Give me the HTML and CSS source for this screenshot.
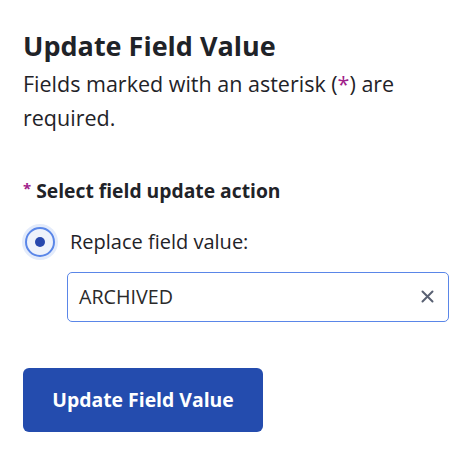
FILE: index.html
```html
<!DOCTYPE html>
<html>
<head>
<meta charset="utf-8">
<link rel="stylesheet" href="styles.css">
</head>
<body>
<main class="panel">
  <h1 class="title">Update Field Value</h1>
  <p class="note">Fields marked with an asterisk (<span class="req">*</span>) are required.</p>
  <form class="form">
    <div class="label"><span class="req req-sm">*</span> Select field update action</div>
    <label class="option">
      <span class="radio"><span class="dot"></span></span>
      <span class="option-text">Replace field value:</span>
    </label>
    <div class="input">
      <span class="input-value">ARCHIVED</span>
      <svg class="clear" width="13" height="13" viewBox="0 0 13 13"><path d="M1.5 1.5 L11.5 11.5 M11.5 1.5 L1.5 11.5" stroke="#596173" stroke-width="2" stroke-linecap="round"/></svg>
    </div>
    <button type="button" class="submit">Update Field Value</button>
  </form>
</main>
</body>
</html>
```
FILE: styles.css
```css
html, body { margin: 0; padding: 0; background: #fff; }
body { font-family: "Open Sans", "Noto Sans", sans-serif; color: #1f2328; }
.panel { padding: 28px 23px 0 23px; }
.title { margin: 0; font-size: 27px; font-weight: 700; line-height: 36px; color: #1f2328; letter-spacing: 0; }
.note { margin: 3px 0 0 0; font-size: 21.5px; line-height: 34px; width: 410px; letter-spacing: 0; }
.req { color: #a0208a; }
.req-sm { font-size: 15px; vertical-align: top; position: relative; top: -3px; }
.form { margin-top: 43px; display: flex; flex-direction: column; align-items: flex-start; }
.label { font-size: 19.3px; font-weight: 700; line-height: 26px; }
.option { display: flex; align-items: center; gap: 15px; margin-top: 22.5px; margin-left: 2px; }
.radio { width: 26px; height: 26px; border: 2px solid #5a86e8; border-radius: 50%; background: #eef2fb; box-shadow: 0 0 0 3px #e3ebfb; display: flex; align-items: center; justify-content: center; }
.dot { width: 10px; height: 10px; border-radius: 50%; background: #2747ad; }
.option-text { font-size: 20px; line-height: 30px; }
.input { margin: 15px 0 0 44px; width: 382px; height: 50px; box-sizing: border-box; border: 1.5px solid #5a86e8; border-radius: 5px; display: flex; align-items: center; justify-content: space-between; padding: 0 14.5px 0 11px; }
.input-value { font-size: 19.7px; color: #2a2a2a; }
.submit { margin-top: 46px; width: 240px; height: 64px; border: none; border-radius: 6px; background: #244cae; color: #fff; font-family: inherit; font-size: 19.4px; font-weight: 700; padding: 0; }
```
